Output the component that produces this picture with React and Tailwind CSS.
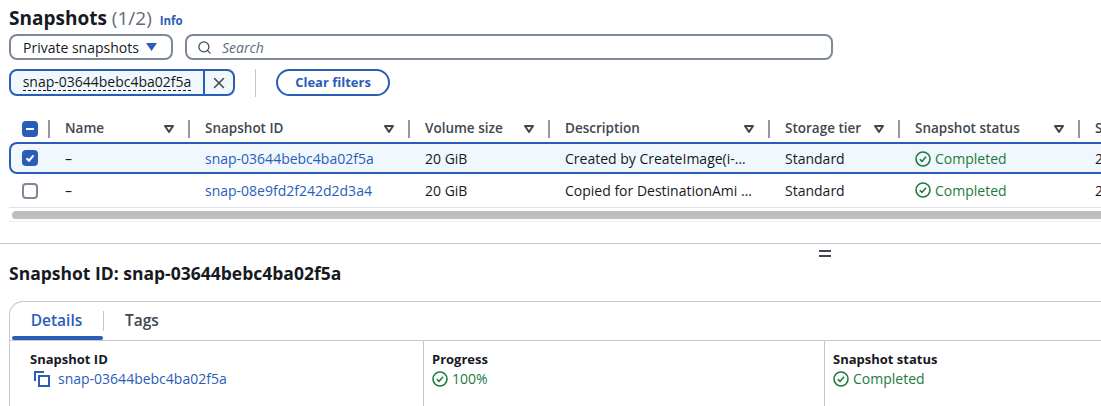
import React from 'react';
import { Search, X } from 'lucide-react';

const font = "font-['Open_Sans',sans-serif]";

const SortIcon = () => (
  <svg width="10" height="8" viewBox="0 0 10 8" className="shrink-0">
    <path d="M1 1h8L5 7z" fill="none" stroke="#414750" strokeWidth="2" strokeLinejoin="round" />
  </svg>
);

const StatusOk = () => (
  <svg width="16" height="16" viewBox="0 0 16 16" className="shrink-0">
    <circle cx="8" cy="8" r="7" fill="none" stroke="#1d7a3c" strokeWidth="1.6" />
    <path d="M4.8 8.2l2.2 2.2 4-4.6" fill="none" stroke="#1d7a3c" strokeWidth="1.6" />
  </svg>
);

const CopyIcon = () => (
  <svg width="16" height="16" viewBox="0 0 16 16" className="shrink-0">
    <rect x="5" y="5" width="10" height="10" fill="none" stroke="#2a5db8" strokeWidth="2" />
    <path d="M1 10V1h9" fill="none" stroke="#2a5db8" strokeWidth="2" />
  </svg>
);

const Completed = ({ label = 'Completed' }) => (
  <span className="flex items-center gap-1 text-[#1d7a3c]">
    <StatusOk />
    {label}
  </span>
);

const columns = ['Name', 'Snapshot ID', 'Volume size', 'Description', 'Storage tier', 'Snapshot status'];

const rows = [
  { id: 'snap-03644bebc4ba02f5a', desc: 'Created by CreateImage(i-…', selected: true },
  { id: 'snap-08e9fd2f242d2d3a4', desc: 'Copied for DestinationAmi …', selected: false },
];

const gridCols = 'grid-cols-[39px_140px_220px_140px_220px_130px_180px_60px]';
// selected row has a 2px border on the left, so its first column is 2px less
const gridColsSel = 'grid-cols-[37px_140px_220px_140px_220px_130px_180px_60px]';

const Check = ({ state }) => {
  if (state === 'none') {
    return <span className="block w-4 h-4 rounded-[4px] border-2 border-[#7d8998] bg-white" />;
  }
  return (
    <span className="flex items-center justify-center w-4 h-4 rounded-[4px] bg-[#2a5db8]">
      {state === 'some' ? (
        <span className="block w-2 h-[2px] bg-white" />
      ) : (
        <svg width="12" height="12" viewBox="0 0 12 12">
          <path d="M2.5 6.2l2.5 2.5 4.5-5.4" fill="none" stroke="white" strokeWidth="2" />
        </svg>
      )}
    </span>
  );
};

export default function App() {
  return (
    <div className={`${font} w-[1101px] h-[406px] overflow-hidden bg-white text-[14px] text-[#16191f]`}>
      <div className="px-[9px] pt-[4px]">
        <div className="flex items-baseline h-[28px]">
          <h1 className="text-[19px] font-bold leading-[28px]">Snapshots</h1>
          <span className="ml-[5px] text-[19px] leading-[28px] text-[#5f6b7a]">(1/2)</span>
          <span className="ml-[8px] text-[11.5px] font-bold text-[#2a5db8]">Info</span>
        </div>

        <div className="flex gap-3 mt-[2px]">
          <div className="flex items-center justify-between w-[164px] h-[26px] pl-[12px] pr-[14px] rounded-lg border-2 border-[#7d8998]">
            <span>Private snapshots</span>
            <svg width="11" height="8" viewBox="0 0 11 8">
              <path d="M0 0h11L5.5 8z" fill="#2a5db8" />
            </svg>
          </div>
          <div className="flex items-center w-[648px] h-[26px] px-[10px] rounded-lg border-2 border-[#7d8998]">
            <Search size={15} strokeWidth={2} className="text-[#414750]" />
            <span className="ml-[10px] italic text-[#5f6b7a]">Search</span>
          </div>
        </div>

        <div className="flex items-center mt-[9px] h-[27px]">
          <div className="flex h-[27px] w-[226px] rounded-lg border-2 border-[#2a5db8] bg-[#f0f8fe] overflow-hidden">
            <span className="flex items-center justify-center w-[194px] border-r-2 border-[#2a5db8]">
              <span className="border-b border-dashed border-[#16191f] leading-[16px]">snap-03644bebc4ba02f5a</span>
            </span>
            <span className="flex flex-1 items-center justify-center text-[#414750]">
              <X size={18} strokeWidth={2} />
            </span>
          </div>
          <span className="block w-px h-[28px] bg-[#c6c6cd] ml-[20px]" />
          <button className="ml-[20px] w-[114px] h-[27px] rounded-full border-2 border-[#2a5db8] text-[#2a5db8] font-bold text-[13px]">
            Clear filters
          </button>
        </div>

        <div className={`grid ${gridCols} mt-[19px] h-[27px] items-center text-[13.5px] font-semibold text-[#414750]`}>
          <div className="pl-[13px]"><Check state="some" /></div>
          {columns.map((label) => (
            <div key={label} className="flex items-center justify-between h-[18px] border-l-2 border-[#8d99a8] pl-[15px] pr-[14px]">
              <span>{label}</span>
              <SortIcon />
            </div>
          ))}
          <div className="h-[18px] border-l-2 border-[#8d99a8] pl-[15px] flex items-center">S</div>
        </div>

        <div className="-mr-[20px] border-b border-[#e0e2e6]">
          {rows.map((r) => {
            const cell = r.selected ? 'pl-[17px] pt-[1px]' : 'pl-[17px] pb-[1px]';
            return (
              <div
                key={r.id}
                className={
                  r.selected
                    ? `grid ${gridColsSel} items-center h-[32px] rounded-l-lg border-2 border-r-0 border-[#2a5db8] bg-[#f0f8fe]`
                    : `grid ${gridCols} items-center h-[33px]`
                }
              >
                <div className={r.selected ? 'pl-[11px]' : 'pl-[13px]'}><Check state={r.selected ? 'all' : 'none'} /></div>
                <div className={cell}>–</div>
                <div className={`${cell} text-[#2a5db8]`}>{r.id}</div>
                <div className={cell}>20 GiB</div>
                <div className={`${cell} whitespace-nowrap`}>{r.desc}</div>
                <div className={cell}>Standard</div>
                <div className={cell}><Completed /></div>
                <div className={cell}>2</div>
              </div>
            );
          })}
        </div>

        <div className="-mr-[20px] pt-[3px] pb-[2px] border-b border-[#eeeeee]">
          <div className="ml-[3px] h-[8px] rounded-l-full bg-[#bebebe]" />
        </div>
      </div>

      <div className="mt-[21px] border-t border-[#c6c6cd] relative">
        <div className="absolute left-[819px] top-[6px] w-[12px] h-[7px] border-y-2 border-[#414750]" />
        <h2 className="px-[9px] pt-[18px] text-[17.5px] font-bold leading-[22px]">Snapshot ID: snap-03644bebc4ba02f5a</h2>
        <div className="ml-[9px] mt-[17px] rounded-tl-[14px] border-t border-l border-[#c6c6cd]">
          <div className="flex h-[38px] items-center">
            <div className="relative flex items-center justify-center w-[93px] h-full">
              <span className="text-[15.5px] font-semibold text-[#2a5db8]">Details</span>
              <span className="absolute left-[2px] right-0 bottom-0 h-[4px] rounded-full bg-[#2a5db8]" />
            </div>
            <span className="block w-px h-5 bg-[#c6c6cd]" />
            <span className="ml-[21px] text-[15.5px] font-semibold text-[#414750]">Tags</span>
          </div>
          <div className="grid grid-cols-[413px_401px_1fr] h-[66px] border-t border-[#c6c6cd]">
            <div className="pl-[20px] pt-[9px]">
              <div className="text-[13px] font-bold leading-[18px]">Snapshot ID</div>
              <div className="flex items-center gap-2 mt-[1px] ml-[4px] text-[#2a5db8] leading-[20px]">
                <CopyIcon />
                snap-03644bebc4ba02f5a
              </div>
            </div>
            <div className="border-l border-[#c6c6cd] pl-[8px] pt-[9px]">
              <div className="text-[13px] font-bold leading-[18px]">Progress</div>
              <div className="mt-[1px] leading-[20px]"><Completed label="100%" /></div>
            </div>
            <div className="border-l border-[#c6c6cd] pl-[8px] pt-[9px]">
              <div className="text-[13px] font-bold leading-[18px]">Snapshot status</div>
              <div className="mt-[1px] leading-[20px]"><Completed /></div>
            </div>
          </div>
        </div>
      </div>
    </div>
  );
}
